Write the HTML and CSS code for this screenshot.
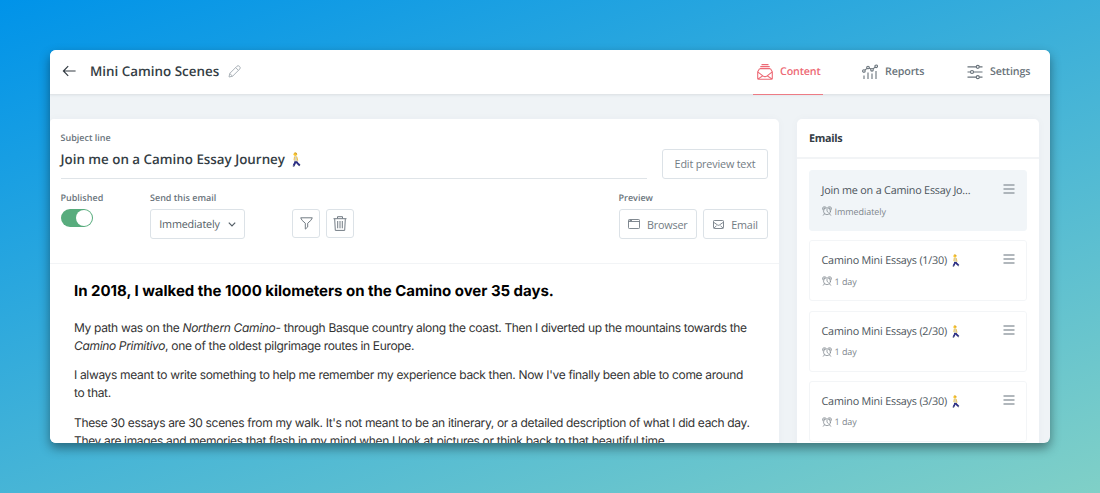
FILE: index.html
```html
<!DOCTYPE html>
<html lang="en">
<head>
<meta charset="utf-8">
<title>Mini Camino Scenes</title>
<link rel="stylesheet" href="styles.css">
</head>
<body>
<svg class="defs" width="0" height="0" aria-hidden="true">
  <symbol id="walker" viewBox="0 0 10 15">
    <path d="M4.600 8.800 4 11 2.600 13.800M4.900 8.800 6.400 11.200 8.600 13.200" fill="none" stroke="#2b2d83" stroke-width="2"/>
    <path d="M1.800 14.200h1.500M8 14l1.200-1" stroke="#555b70" stroke-width="1"/>
    <path d="M3.400 4h2.300l1.200 5.200H3.300z" fill="#d9d6bd"/>
    <path d="M3.500 4.700 3 8.200M5.800 4.700l1 4" fill="none" stroke="#efc14c" stroke-width="1"/>
    <circle cx="4.300" cy="2.300" r="1.800" fill="#fac52e"/>
    <path d="M2.700 1.200Q4.500-.2 6 1.500v1.300L4.800 1.500z" fill="#c99a35"/>
  </symbol>
  <symbol id="menu" viewBox="0 0 12 10"><path d="M.5 1h11M.5 5h11M.5 9h11" stroke="#98a0a6" stroke-width="1.3"/></symbol>
  <symbol id="clock" viewBox="0 0 10 10">
    <g fill="none" stroke="#7e868c" stroke-width=".75" stroke-linecap="round">
      <circle cx="5" cy="5.2" r="3.5"/><path d="M5 3v2.3l1.3 1.1M2.4 7.9 1.3 9.3M7.6 7.9l1.1 1.4M.6 3.3C-.2 1.4 1.5.2 3.2.9zM9.4 3.3C10.2 1.4 8.5.2 6.8.9z"/>
    </g>
  </symbol>
</svg>
<div class="window">
  <header class="topbar">
    <svg class="back" viewBox="0 0 14 12"><path d="M13.600 6H1.600M6.200 1.200 1.400 6l4.800 4.800" fill="none" stroke="#343d44" stroke-width="1.200"/></svg>
    <h1 class="title">Mini Camino Scenes</h1>
    <svg class="pencil" viewBox="0 0 13 13"><path d="M1 12l.8-3.6L8.9 1.3Q10-.1 11.5 1.4T11.700 4.100L4.600 11.200zM7.700 2.600l2.700 2.700M1.800 8.500l2.700 2.700" fill="none" stroke="#a9b1b7" stroke-width="1"/></svg>
    <nav class="tabs">
      <a class="tab active">
        <svg width="16" height="16" viewBox="0 0 16 16" fill="none" stroke="#ed6a76" stroke-width="1.100" stroke-linejoin="round"><path d="M4.500.6h7M3.300 2.600h9.400M2.700 4.600h10.600M2.500 4.800.7 7.700v6.700q0 .9.900.9h12.800q.9 0 .9-.9V7.700L13.500 4.800M.7 7.900l5.200 4q2.100 1.500 4.200 0l5.200-4M1.100 14.900l4.800-3.200M14.900 14.900l-4.800-3.200"/></svg>
        <span>Content</span>
      </a>
      <a class="tab">
        <svg width="16" height="16" viewBox="0 0 16 16" fill="none" stroke="#69737b" stroke-width="1.100"><circle cx="1.900" cy="7" r="1.300"/><circle cx="6" cy="3.500" r="1.300"/><circle cx="10" cy="5.800" r="1.300"/><circle cx="14.200" cy="2.300" r="1.300"/><path d="M2.900 6.100 5 4.400M7.100 4.100l1.800 1M11 4.900l2.200-1.800M2 11.500V15M6 8.500V15M10 9.500V15M14 7V15"/></svg>
        <span>Reports</span>
      </a>
      <a class="tab">
        <svg width="16" height="16" viewBox="0 0 16 16" fill="none" stroke="#69737b" stroke-width="1.200"><path d="M.5 2.800h8.800M12.300 2.800h3.200M.5 8h3M6.500 8h9M.5 13.200h8.800M12.300 13.200h3.200"/><circle cx="10.800" cy="2.800" r="1.500"/><circle cx="5" cy="8" r="1.500"/><circle cx="10.800" cy="13.200" r="1.500"/></svg>
        <span>Settings</span>
      </a>
    </nav>
  </header>
  <main class="workspace">
    <section class="editor">
      <div class="fields">
        <div class="subject-row">
          <div class="subject">
            <label class="label">Subject line</label>
            <div class="subject-text"><span>Join me on a Camino Essay Journey</span><svg width="10" height="15"><use href="#walker"/></svg></div>
          </div>
          <button class="btn preview-text"><span>Edit preview text</span></button>
        </div>
        <div class="options">
          <div class="published"><label class="label">Published</label><div class="toggle"><i></i></div></div>
          <div class="send">
            <label class="label">Send this email</label>
            <div class="btn select"><span>Immediately</span><svg width="8" height="5" viewBox="0 0 8 5"><path d="M.8.700 4 4 7.200.700" fill="none" stroke="#555f67" stroke-width="1.200"/></svg></div>
          </div>
          <div class="tools">
            <button class="btn square"><svg width="13" height="13" viewBox="0 0 13 13"><path d="M.7.800h11.600Q11.800 3.200 7.700 6.200V10l-2.400 2.100V6.200Q1.200 3.200.7.800z" fill="none" stroke="#737c84" stroke-width="1"/></svg></button>
            <button class="btn square"><svg width="14" height="15" viewBox="0 0 14 15"><path d="M.5 2.700h13M4.500 2.500V.7h5v1.800M1.700 2.900l.6 11.500h9.400l.6-11.500M4.700 5v7.300M7 5v7.300M9.300 5v7.300" fill="none" stroke="#737c84" stroke-width="1"/></svg></button>
          </div>
          <div class="preview">
            <label class="label">Preview</label>
            <div class="preview-buttons">
              <button class="btn browser"><svg width="12" height="10" viewBox="0 0 12 10" fill="none" stroke="#737c84" stroke-width=".9"><rect x=".5" y=".5" width="11" height="9" rx=".8"/><path d="M.5 2.500h11M1.500 1.500h2.500"/></svg><span>Browser</span></button>
              <button class="btn email"><svg width="11" height="9" viewBox="0 0 11 9" fill="none" stroke="#737c84" stroke-width=".9"><rect x=".5" y=".5" width="10" height="8" rx=".8"/><path d="M.7 2.300 4.600 5q.9.600 1.800 0l3.900-2.700M1 8l2.500-2.200M10 8 7.500 5.800"/></svg><span>Email</span></button>
            </div>
          </div>
        </div>
      </div>
      <article class="body">
        <h2>In 2018, I walked the 1000 kilometers on the Camino over 35 days.</h2>
        <p>My path was on the <em>Northern Camino</em>- through Basque country along the coast. Then I diverted up the mountains towards the<br><em>Camino Primitivo</em>, one of the oldest pilgrimage routes in Europe.</p>
        <p>I always meant to write something to help me remember my experience back then. Now I've finally been able to come around<br>to that.</p>
        <p>These 30 essays are 30 scenes from my walk. It's not meant to be an itinerary, or a detailed description of what I did each day.<br>They are images and memories that flash in my mind when I look at pictures or think back to that beautiful time.</p>
      </article>
    </section>
    <aside class="emails">
      <h3>Emails</h3>
      <div class="list">
        <div class="item selected"><div class="name"><span>Join me on a Camino Essay Jo...</span></div><div class="delay"><svg width="10" height="10"><use href="#clock"/></svg><span>Immediately</span></div><svg class="menu" width="12" height="10"><use href="#menu"/></svg></div>
        <div class="item"><div class="name"><span>Camino Mini Essays (1/30)</span><svg width="9" height="13" viewBox="0 0 10 15"><use href="#walker" width="10" height="15"/></svg></div><div class="delay"><svg width="10" height="10"><use href="#clock"/></svg><span>1 day</span></div><svg class="menu" width="12" height="10"><use href="#menu"/></svg></div>
        <div class="item"><div class="name"><span>Camino Mini Essays (2/30)</span><svg width="9" height="13" viewBox="0 0 10 15"><use href="#walker" width="10" height="15"/></svg></div><div class="delay"><svg width="10" height="10"><use href="#clock"/></svg><span>1 day</span></div><svg class="menu" width="12" height="10"><use href="#menu"/></svg></div>
        <div class="item"><div class="name"><span>Camino Mini Essays (3/30)</span><svg width="9" height="13" viewBox="0 0 10 15"><use href="#walker" width="10" height="15"/></svg></div><div class="delay"><svg width="10" height="10"><use href="#clock"/></svg><span>1 day</span></div><svg class="menu" width="12" height="10"><use href="#menu"/></svg></div>
      </div>
    </aside>
  </main>
</div>
</body>
</html>
```
FILE: styles.css
```css
* { box-sizing: border-box; }
body {
  margin: 0;
  height: 493px;
  padding: 50px;
  overflow: hidden;
  font-family: "Open Sans", "Noto Sans", sans-serif;
  text-rendering: geometricPrecision;
  color: #69737b;
  background: linear-gradient(160deg, #0093e9 0%, #80d0c7 100%);
}
.defs { position: absolute; }
svg { display: block; flex: none; }
h1, h2, h3, p { margin: 0; }
.window {
  width: 1000px;
  height: 393px;
  overflow: hidden;
  border-radius: 6px;
  background: #eff3f6;
  box-shadow: 0 5px 11px rgba(0, 0, 0, .42);
}
.topbar {
  display: flex;
  align-items: center;
  height: 45px;
  padding: 0 17px 2px 12px;
  background: #fff;
  border-bottom: 1px solid #e1e5e8;
  box-shadow: 0 1px 2px rgba(40, 60, 80, .06);
}
.back { width: 14px; height: 12px; }
.title { margin-left: 14px; font-size: 13.400px; font-weight: 600; color: #343d44; white-space: nowrap; }
.pencil { width: 13px; height: 13px; margin-left: 9px; }
.tabs { display: flex; gap: 35px; margin-left: auto; height: 45px; margin-bottom: -3px; }
.tab {
  display: flex;
  align-items: center;
  gap: 7px;
  width: 70px;
  height: 45px;
  padding: 0 0 1px 4px;
  font-size: 10.700px;
  font-weight: 600;
  letter-spacing: -.13px;
  border-bottom: 1px solid transparent;
}
.tab.active { color: #ed6a76; border-bottom-color: #ed7b84; }
.workspace { display: flex; align-items: flex-start; gap: 18px; padding-top: 24px; }
.editor {
  width: 729px;
  height: 340px;
  background: #fff;
  border-radius: 4px 5px 0 0;
  box-shadow: 0 0 10px rgba(40, 60, 80, .03);
}
.fields { height: 145px; padding: 12px 11px 0 10.500px; border-bottom: 1px solid #f2f4f6; }
.label { display: block; font-size: 9px; line-height: 14px; font-weight: 600; white-space: nowrap; }
.options .label { line-height: 15px; }
.subject-row { display: flex; justify-content: space-between; }
.subject { width: 586.500px; height: 48px; border-bottom: 1px solid #dfe4e8; }
.subject-text { display: flex; align-items: center; gap: 6px; margin-top: 5px; font-size: 13.370px; line-height: 18px; font-weight: 600; color: #343d44; }
.btn {
  display: flex;
  align-items: center;
  justify-content: center;
  padding: 0;
  background: #fff;
  border: 1px solid #dce2e7;
  border-radius: 3px;
  font: 400 10.800px "Open Sans", "Noto Sans", sans-serif;
  letter-spacing: -.18px;
  color: #737c84;
  white-space: nowrap;
}
.preview-text { width: 106px; height: 30px; margin-top: 18px; }
.preview-text span { padding-bottom: 1px; }
.options { display: flex; margin-top: 11px; }
.published { width: 89.500px; }
.toggle { display: flex; justify-content: flex-end; width: 32.500px; height: 18px; margin-top: 4px; padding: 1px; border-radius: 9px; background: #58ac7d; }
.toggle i { width: 16px; height: 16px; border-radius: 50%; background: #fff; }
.select { width: 95px; height: 30px; margin-top: 4px; gap: 8px; color: #555f67; }
.tools { display: flex; gap: 6px; margin: 19px 0 0 47px; }
.square { width: 28px; height: 29px; }
.preview { margin-left: auto; }
.preview-buttons { display: flex; gap: 6px; margin-top: 4px; }
.browser { width: 78.500px; height: 30px; gap: 7px; }
.email { width: 65px; height: 30px; gap: 7px; }
.body { padding: 17px 0 0 24px; font-family: Inter, sans-serif; color: #333; font-size: 12px; line-height: 17.700px; white-space: nowrap; }
.body h2 { margin-bottom: 18px; font-size: 15px; line-height: 20px; font-weight: 700; letter-spacing: -.025px; color: #000; }
.body p { margin-bottom: 12px; letter-spacing: -.337px; }
.emails { width: 242px; height: 340px; background: #fff; border-radius: 5px 5px 0 0; box-shadow: 0 0 10px rgba(40, 60, 80, .03); }
.emails h3 { height: 40px; padding-left: 12px; font-size: 10.800px; line-height: 39px; font-weight: 700; letter-spacing: -.3px; color: #343d44; border-bottom: 2px solid #f2f4f6; }
.list { display: grid; gap: 9.300px; padding: 11px 12px 0; }
.item { display: grid; grid-template-columns: 1fr 12px; height: 61px; padding: 12px 11px 0 11.500px; border: 1px solid #f3f5f7; border-radius: 3px; align-content: start; }
.item.selected { background: #f1f5f8; border-color: #f1f5f8; }
.name { display: flex; align-items: center; gap: 4px; height: 15px; font-size: 10.800px; letter-spacing: -.2px; color: #4b545b; white-space: nowrap; }
.delay { grid-row: 2; display: flex; align-items: center; gap: 3px; height: 14px; margin-top: 6px; font-size: 9px; letter-spacing: -.05px; color: #7e868c; }
.menu { grid-column: 2; grid-row: 1; margin-top: 1px; }
```
